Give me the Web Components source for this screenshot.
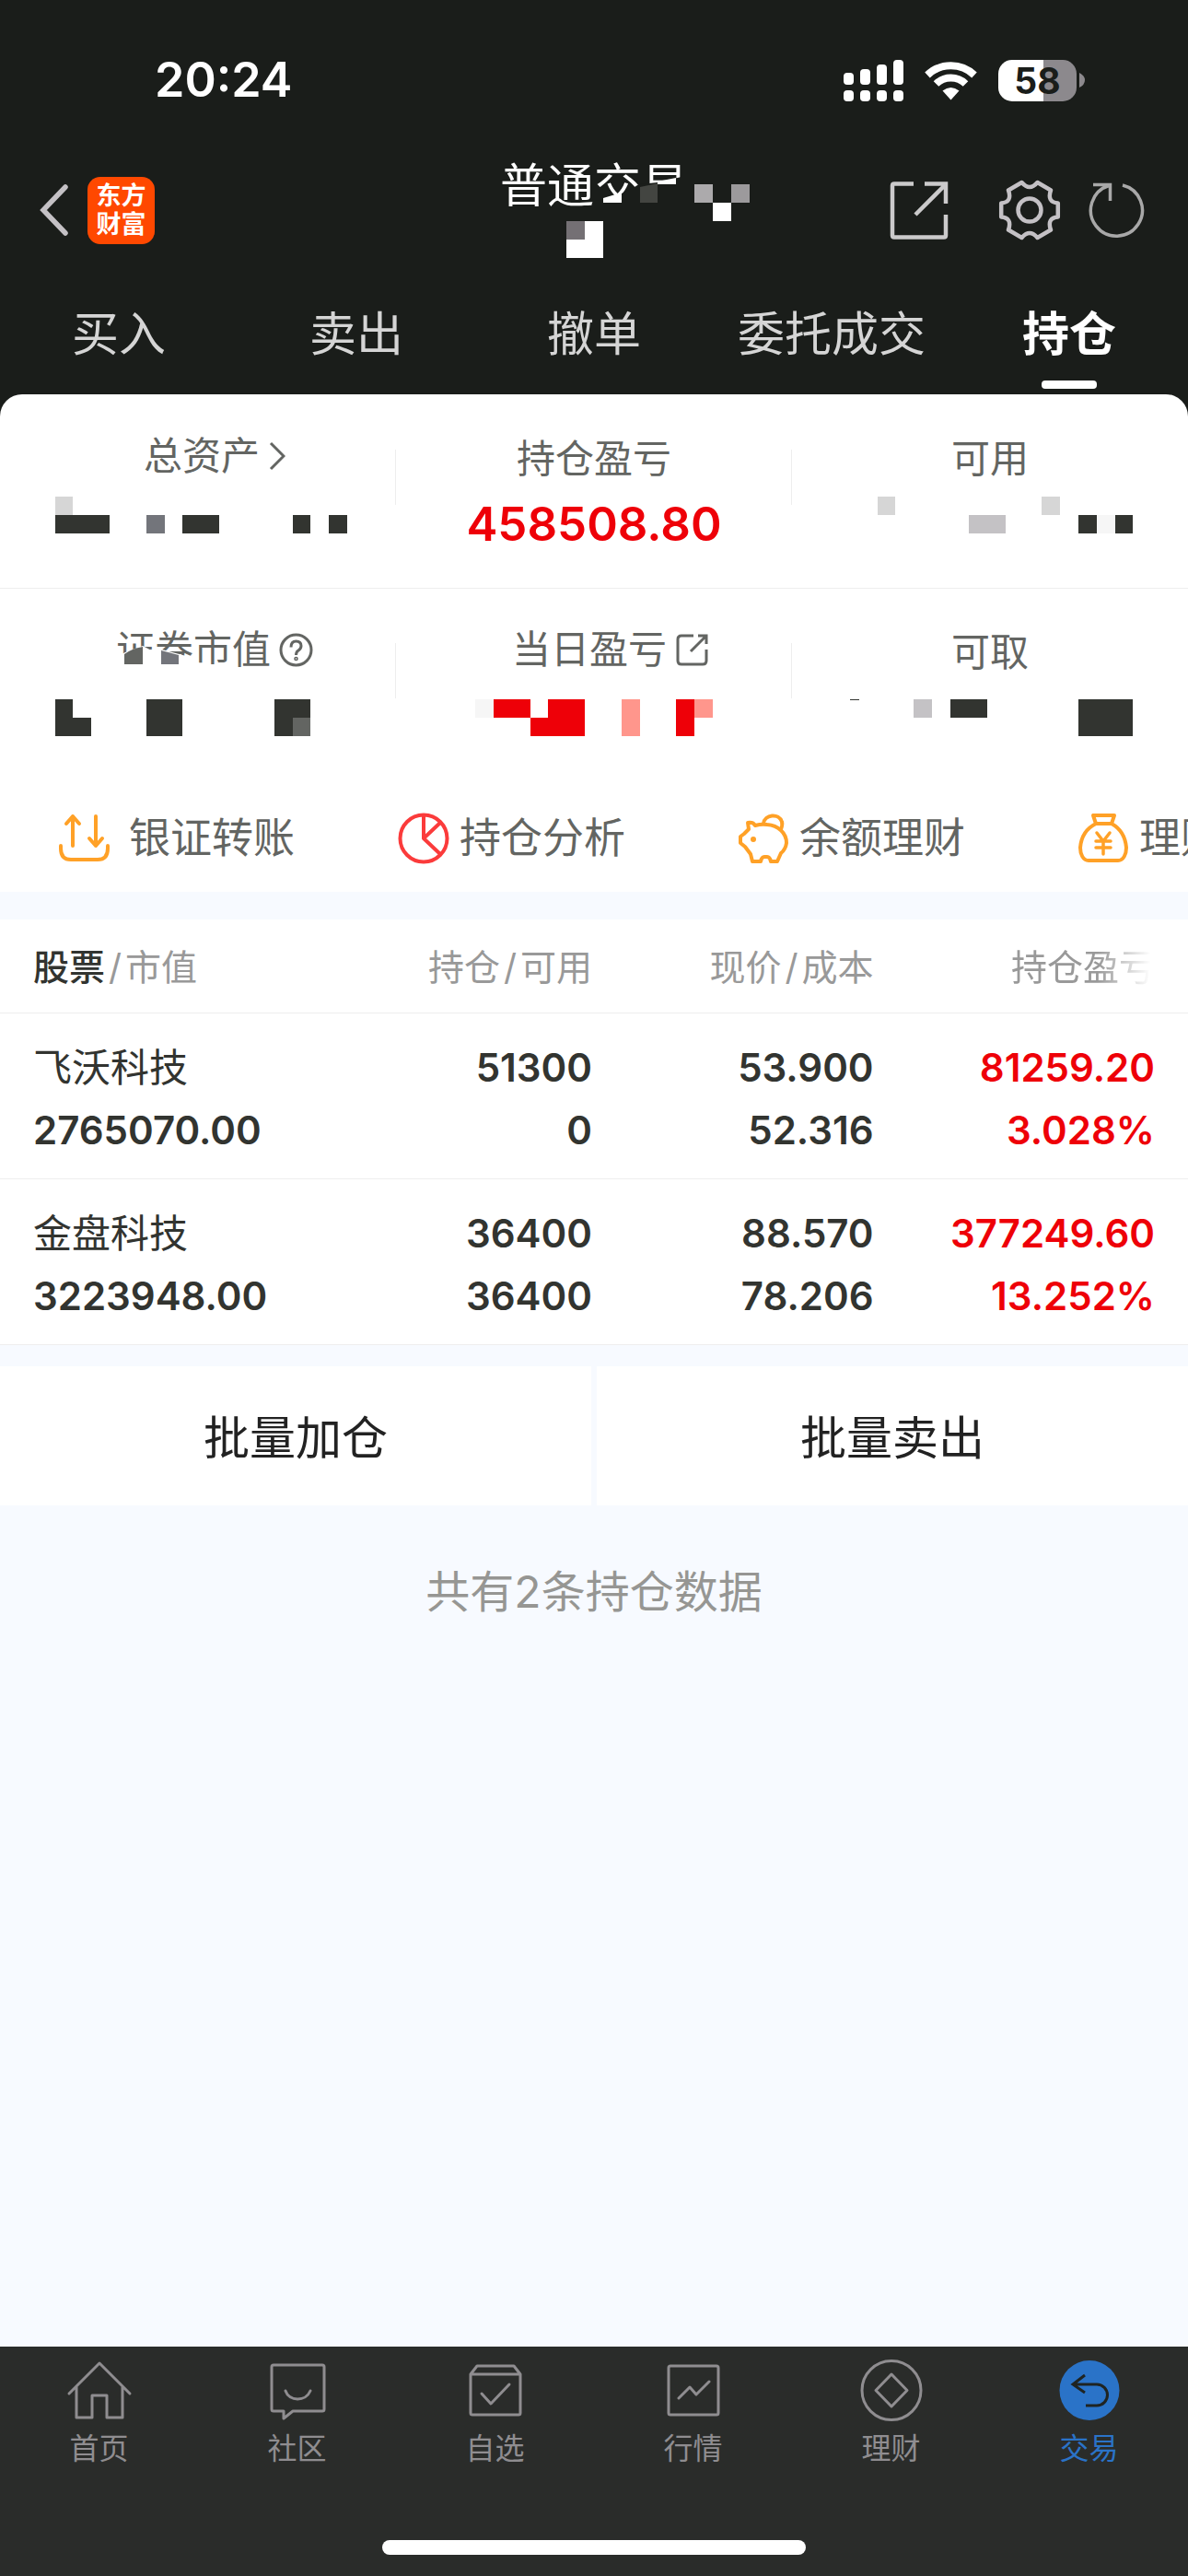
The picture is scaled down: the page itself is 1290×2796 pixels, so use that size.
<!DOCTYPE html>
<html lang="zh-CN">
<head>
<meta charset="utf-8">
<meta name="viewport" content="width=device-width, initial-scale=1">
<title>普通交易 - 持仓</title>
<style>
    body {
        margin: 0;
        font-family: Inter, "Noto Sans CJK SC", sans-serif;
        background: #f7faff;
    }
</style>
</head>
<body>
<trade-app></trade-app>

<script>
(function () {
    // every element below gets an open shadow root filled from one template string
    class BaseElement extends HTMLElement {
        constructor() {
            super();
            this.attachShadow({ mode: 'open' });
        }
        connectedCallback() {
            this.shadowRoot.innerHTML = `
                <style>
                *{ box-sizing:border-box; }
                :host{ display:block; }
                svg{ display:block; }
                a{ color:inherit; text-decoration:none; }
                button{
                    margin:0;
                    padding:0;
                    border:none;
                    background:none;
                    color:inherit;
                    font:inherit;
                    cursor:pointer;
                }
                </style>` + this.template();
        }
        template() { return ''; }
    }

    class StatusBar extends BaseElement {
        template() {
            return `
            <style>
            :host{ padding:55px 112px 51px 168px; color:#fff; }
            .bar{ display:flex; align-items:center; justify-content:space-between; height:64px; }
            .time{ font-size:52px; font-weight:600; line-height:64px; }
            .icons{ display:flex; align-items:center; gap:23px; }
            .battery{ display:flex; align-items:center; gap:3px; }
            .level{
                width:85px;
                border-radius:15px;
                background:linear-gradient(to right, #fff 58%, #8c898d 58%);
                color:#1a1d1a;
                font-size:39px;
                font-weight:700;
                line-height:45px;
                text-align:center;
            }
            </style>
            <div class="bar">
                <div class="time">20:24</div>
                <div class="icons">
                    <svg width="65" height="45" viewBox="0 0 65 45" fill="#fff">
                        <rect x="0" y="14" width="11" height="13" rx="4"/>
                        <rect x="18" y="10" width="11" height="17" rx="4"/>
                        <rect x="36" y="5" width="11" height="22" rx="4"/>
                        <rect x="54" y="0" width="11" height="27" rx="4"/>
                        <rect x="0" y="33" width="11" height="12" rx="4"/>
                        <rect x="18" y="33" width="11" height="12" rx="4"/>
                        <rect x="36" y="33" width="11" height="12" rx="4"/>
                        <rect x="54" y="33" width="11" height="12" rx="4"/>
                    </svg>
                    <svg width="57" height="45" viewBox="0 0 57 45">
                        <path d="M3 16.5A37 37 0 0 1 54 16.5" fill="none" stroke="#fff" stroke-width="8"/>
                        <path d="M12.500 26A23 23 0 0 1 44.500 26" fill="none" stroke="#fff" stroke-width="8"/>
                        <path d="M19.500 33.500Q28.500 26.500 37.500 33.500L28.500 43.500Z" fill="#fff"/>
                    </svg>
                    <div class="battery">
                        <div class="level">58</div>
                        <svg width="6" height="16" viewBox="0 0 6 16"><path d="M0 0Q6 3 6 8Q6 13 0 16Z" fill="#8c898d"/></svg>
                    </div>
                </div>
            </div>`;
        }
    }
    customElements.define('status-bar', StatusBar);

    class TradeHeader extends BaseElement {
        template() {
            return `
            <style>
            :host{ padding:0 42px; }
            header{ display:grid; grid-template-columns:1fr auto 1fr; align-items:center; height:116px; }
            .left{ display:flex; align-items:center; gap:21px; }
            .logo{
                width:73px;
                height:73px;
                padding:5px 0;
                border-radius:14px;
                background:#ff4800;
                color:#fff;
                font-size:27px;
                font-weight:700;
                line-height:31px;
                text-align:center;
            }
            h1{
                position:relative;
                width:204px;
                height:104px;
                margin:0;
                color:#fff;
                font-size:51px;
                font-weight:400;
                line-height:52px;
                white-space:nowrap;
            }
            .mask{ position:absolute; left:0; top:0; overflow:visible; }
            .right{ display:flex; align-items:center; justify-content:flex-end; }
            .right button + button{ margin-left:48px; }
            .right button + .refresh{ margin-left:22px; }
            </style>
            <header>
                <div class="left">
                    <button aria-label="返回">
                        <svg width="32" height="56" viewBox="0 0 32 56"><path d="M29 3L5 28L29 53" fill="none" stroke="#c4c1c5" stroke-width="5.500" stroke-linecap="round"/></svg>
                    </button>
                    <div class="logo">东方<br>财富</div>
                </div>
                <h1>普通交易
                    <svg class="mask" width="204" height="104" viewBox="0 0 204 104">
                        <path d="M104 42L132 34L152 24L171 22L197 16L212 16V60H104Z" fill="#1a1d1a"/>
                        <path d="M112 39L132 33V44H112Z" fill="#fff"/>
                        <path d="M152 27L171 23V44H152Z" fill="#434541"/>
                        <path d="M171 21L191 17V24H171Z" fill="#fff"/>
                        <path d="M211 24h20v20h-20z" fill="#acaaac"/>
                        <path d="M251 24h20v20h-20z" fill="#9c9a9c"/>
                        <path d="M231 44h20v20h-20zM72 64h40v40h-40z" fill="#fff"/>
                        <path d="M72 64h20v20h-20z" fill="#747074"/>
                    </svg>
                </h1>
                <div class="right">
                    <button aria-label="分享">
                        <svg width="72" height="72" viewBox="0 0 72 72" fill="none" stroke="#cbcacb" stroke-width="4.500">
                            <path d="M30 7.500H9Q7 7.500 7 9.500V63.500Q7 65.500 9 65.500H63Q65 65.500 65 63.500V41"/>
                            <path d="M42 7.500H65V29M64 9L32 41"/>
                        </svg>
                    </button>
                    <button aria-label="设置">
                        <svg width="72" height="72" viewBox="0 0 72 72" fill="none" stroke="#c4c1c5" stroke-width="4.500" stroke-linejoin="round">
                            <path d="M66.800 43.500Q54.500 44.500 59 57.500L44.500 66Q36 56 27.500 66L13 57.500Q17.500 44.500 5.200 43.500V28.500Q17.500 27.500 13 14.500L27.500 6Q36 16 44.500 6L59 14.500Q54.500 27.500 66.800 28.500Z"/>
                            <circle cx="36" cy="36" r="12.500"/>
                        </svg>
                    </button>
                    <button class="refresh" aria-label="刷新">
                        <svg width="72" height="72" viewBox="0 0 72 72" fill="none" stroke="#a8a8a8" stroke-width="3.500">
                            <path d="M43 9A28 28 0 1 1 28 9.500M11 8.500H29.500V26"/>
                        </svg>
                    </button>
                </div>
            </header>`;
        }
    }
    customElements.define('trade-header', TradeHeader);

    class TradeTabs extends BaseElement {
        template() {
            return `
            <style>
            nav{ display:grid; grid-template-columns:repeat(5, 1fr); padding:38px 0 6px; }
            a{
                display:flex;
                flex-direction:column;
                align-items:center;
                gap:11px;
                color:#d5d5d5;
                font-size:51px;
                line-height:78px;
                white-space:nowrap;
            }
            a::after{ content:""; width:60px; height:9px; border-radius:4px; }
            a.active{ color:#fff; font-weight:700; }
            a.active::after{ background:#fff; }
            </style>
            <nav>
                <a href="#buy">买入</a>
                <a href="#sell">卖出</a>
                <a href="#cancel">撤单</a>
                <a href="#orders">委托成交</a>
                <a href="#holdings" class="active">持仓</a>
            </nav>`;
        }
    }
    customElements.define('trade-tabs', TradeTabs);

    // hidden amounts: x, y, width, height, colour of each block
    const DARK = '#323430', RED = '#ee0008', PINK = '#ff968c', PALE = '#d6d6d6';
    const MASKS = {
        total: [[60, 11, 19, 20, PALE], [60, 31, 59, 20, DARK], [159, 31, 20, 20, '#73757b'], [198, 31, 40, 20, DARK], [318, 31, 19, 20, DARK], [357, 31, 20, 20, DARK]],
        usable: [[93, 11, 19, 20, PALE], [271, 11, 20, 20, PALE], [192, 31, 40, 20, '#c4c2c5'], [311, 31, 20, 20, DARK], [331, 31, 20, 20, '#f6f6f6'], [351, 31, 19, 20, DARK]],
        market: [[60, 21, 19, 20, DARK], [60, 41, 39, 20, DARK], [159, 21, 39, 40, DARK], [298, 21, 39, 40, DARK], [318, 41, 19, 20, '#636562']],
        today: [[86, 21, 20, 20, '#f6f6f6'], [106, 21, 40, 20, RED], [146, 41, 19, 20, RED], [165, 21, 40, 40, RED], [245, 21, 20, 40, PINK], [304, 21, 20, 40, RED], [324, 21, 20, 20, PINK]],
        drawable: [[63, 21, 10, 1, DARK], [132, 21, 20, 20, '#c4c2c5'], [172, 21, 40, 20, DARK], [311, 21, 59, 40, DARK]]
    };

    class StatCell extends BaseElement {
        template() {
            const blocks = MASKS[this.getAttribute('mask')];
            const value = blocks
                ? `<svg width="430" height="82" viewBox="0 0 430 82" shape-rendering="crispEdges">` +
                  blocks.map(b => `<rect x="${b[0]}" y="${b[1]}" width="${b[2]}" height="${b[3]}" fill="${b[4]}"/>`).join('') +
                  `</svg>`
                : `<div class="value"><slot name="value"></slot></div>`;
            return `
            <style>
            :host{ display:flex; flex-direction:column; align-items:center; padding:40px 0 28px; }
            :host(:not([last])){ background:linear-gradient(#eee, #eee) no-repeat right 0 top 60px / 1px 60px; }
            .label{
                position:relative;
                display:flex;
                align-items:center;
                height:60px;
                color:#636562;
                font-size:42px;
                line-height:60px;
                white-space:nowrap;
            }
            :host([icon]) .label{ height:54px; margin:0 0 6px 36px; line-height:54px; }
            .value{ height:82px; color:#ee0008; font-size:51px; font-weight:600; line-height:82px; }
            </style>
            <div class="label"><slot></slot></div>
            ${value}`;
        }
    }
    customElements.define('stat-cell', StatCell);

    class AssetPanel extends BaseElement {
        template() {
            return `
            <style>
            :host{ background:#fff; border-radius:24px 24px 0 0; overflow:hidden; }
            .row{ display:grid; grid-template-columns:repeat(3, 1fr); }
            .row + .row{ box-shadow:inset 0 1px #eee; }
            .more{ margin-left:10px; }
            .tip{ margin-left:9px; }
            .cover{ position:absolute; left:0; top:0; }
            </style>
            <div class="row">
                <stat-cell icon mask="total">总资产<svg class="more" width="18" height="32" viewBox="0 0 18 32"><path d="M2 2L16 16L2 30" fill="none" stroke="#636562" stroke-width="3"/></svg></stat-cell>
                <stat-cell>持仓盈亏<span slot="value">458508.80</span></stat-cell>
                <stat-cell last mask="usable">可用</stat-cell>
            </div>
            <div class="row">
                <stat-cell icon mask="market">证券市值<button class="tip" aria-label="说明">
                        <svg width="37" height="37" viewBox="0 0 37 37" fill="none" stroke="#636562" stroke-width="3">
                            <circle cx="18.500" cy="18.500" r="16.500"/>
                            <path d="M13 15.500Q13 9 18.500 9Q24 9 24 14Q24 17 21 19Q18.500 20.500 18.500 24"/>
                            <circle cx="18.500" cy="28" r="0.800"/>
                        </svg>
                    </button>
                    <svg class="cover" width="130" height="54" viewBox="0 0 130 54">
                        <path d="M0 35L10 30L29 23L42 30L50 27L76 34L84 43H130V52H0Z" fill="#fff"/>
                        <path d="M9 32Q17 26 29 24V43H9Z" fill="#636562"/>
                        <path d="M49 28L68 33V43H49Z" fill="#73757b"/>
                    </svg></stat-cell>
                <stat-cell icon mask="today">当日盈亏<button class="tip" aria-label="打开当日盈亏">
                        <svg width="37" height="37" viewBox="0 0 37 37" fill="none" stroke="#636562" stroke-width="3">
                            <path d="M20 3H7Q3 3 3 7V30Q3 34 7 34H30Q34 34 34 30V18"/>
                            <path d="M25 3H34V12M33 4L17 20"/>
                        </svg>
                    </button></stat-cell>
                <stat-cell last mask="drawable">可取</stat-cell>
            </div>`;
        }
    }
    customElements.define('asset-panel', AssetPanel);

    class QuickAction extends BaseElement {
        template() {
            return `
            <style>
            :host{ flex:0 0 369px; }
            a{
                display:flex;
                align-items:center;
                gap:11px;
                padding-top:4px;
                color:#636562;
                font-size:45px;
                line-height:116px;
                white-space:nowrap;
            }
            :host([wide]) a{ gap:21px; }
            </style>
            <a href="#action"><slot name="icon"></slot><slot></slot></a>`;
        }
    }
    customElements.define('quick-action', QuickAction);

    class QuickActions extends BaseElement {
        template() {
            return `
            <style>
            :host{ background:#fff; }
            .list{ display:flex; padding-left:63px; overflow-x:auto; scrollbar-width:none; }
            svg{ fill:none; stroke:#ffa127; stroke-width:4; stroke-linecap:round; stroke-linejoin:round; }
            </style>
            <div class="list">
                <quick-action wide>
                    <svg slot="icon" width="56" height="56" viewBox="0 0 56 56">
                        <path d="M16 36V4M9 12L16 4L23 12M41 4V36M34 28L41 36L48 28M3 36V39Q3 51 14 51H43Q54 51 54 39V36"/>
                    </svg>银证转账
                </quick-action>
                <quick-action>
                    <svg slot="icon" width="56" height="56" viewBox="0 0 56 56" style="stroke:#fb3b3b">
                        <circle cx="28" cy="28" r="25.500"/><path d="M28 3V28L46 11M28 28L46 45"/>
                    </svg>持仓分析
                </quick-action>
                <quick-action>
                    <svg slot="icon" width="56" height="56" viewBox="0 0 56 56">
                        <path d="M11 11Q17 10 19 14Q26 12 32 13C44 14 53 22 53 33Q52 40 47 44L43 53H36Q35 48 32 48H29Q26 48 25 53H16L14 45L8 37L3 33V26L7 23L12 18Z"/>
                        <path d="M28 12C29 2 45 0 48 10Q49 13 47 18"/>
                        <circle cx="17" cy="29" r="3" fill="#ffa127" stroke="none"/>
                    </svg>余额理财
                </quick-action>
                <quick-action>
                    <svg slot="icon" width="56" height="56" viewBox="0 0 56 56">
                        <path d="M17 3H40L37 12H20ZM20 12C10 17 4 26 3 38C3 45 6 52 12 52H44C50 52 53 45 53 38C52 26 46 17 37 12"/>
                        <path d="M21 22L28 31L35 22M28 31V45M20 31H36M20 38H36" stroke-width="3.500"/>
                    </svg>理财
                </quick-action>
            </div>`;
        }
    }
    customElements.define('quick-actions', QuickActions);

    const HOLDINGS = [
        ['飞沃科技', '2765070.00', '51300', '0', '53.900', '52.316', '81259.20', '3.028%'],
        ['金盘科技', '3223948.00', '36400', '36400', '88.570', '78.206', '377249.60', '13.252%']
    ];

    class HoldingsTable extends BaseElement {
        template() {
            const rows = HOLDINGS.map(h => `
                <tr>
                    <td><div class="name">${h[0]}</div><div>${h[1]}</div></td>
                    <td><div>${h[2]}</div><div>${h[3]}</div></td>
                    <td><div>${h[4]}</div><div>${h[5]}</div></td>
                    <td class="up"><div>${h[6]}</div><div>${h[7]}</div></td>
                </tr>`).join('');
            return `
            <style>
            :host{ margin-top:30px; background:#fff; }
            table{ width:100%; border-collapse:collapse; table-layout:fixed; color:#323430; }
            th, td{ padding:0; border-bottom:1px solid #eee; text-align:right; white-space:nowrap; }
            th:nth-child(1){ width:26%; }
            th:nth-child(2){ width:24%; }
            th:nth-child(3){ width:24%; }
            th:first-child, td:first-child{ padding-left:36px; text-align:left; }
            th:nth-child(2), td:nth-child(2){ padding-right:2px; }
            th:nth-child(3), td:nth-child(3){ padding-right:6px; }
            th:last-child, td:last-child{ padding-right:36px; }
            th{ padding-top:2px; color:#999; font-size:39px; font-weight:400; line-height:99px; }
            th b{ color:#323430; font-weight:500; }
            th i{ margin:0 4px; font-style:normal; }
            .fade{
                -webkit-mask-image:linear-gradient(to right, #000 60%, transparent 97%);
                mask-image:linear-gradient(to right, #000 60%, transparent 97%);
            }
            td{ padding-top:25px; padding-bottom:18px; font-size:42px; font-weight:600; line-height:68px; }
            .name{ font-weight:400; }
            .up{ color:#ee0008; }
            </style>
            <table>
                <thead>
                    <tr>
                        <th><b>股票</b><i>/</i>市值</th>
                        <th>持仓<i>/</i>可用</th>
                        <th>现价<i>/</i>成本</th>
                        <th><span class="fade">持仓盈亏</span></th>
                    </tr>
                </thead>
                <tbody>${rows}</tbody>
            </table>`;
        }
    }
    customElements.define('holdings-table', HoldingsTable);

    class BatchBar extends BaseElement {
        template() {
            return `
            <style>
            .bar{ display:grid; grid-template-columns:1fr 1fr; gap:6px; margin-top:23px; }
            button{ padding-top:5px; background:#fff; color:#222; font-size:50px; line-height:146px; }
            p{ margin:64px 0; color:#969693; font-size:48px; line-height:60px; text-align:center; }
            </style>
            <div class="bar"><button>批量加仓</button><button>批量卖出</button></div>
            <p>共有2条持仓数据</p>`;
        }
    }
    customElements.define('batch-bar', BatchBar);

    class BottomBar extends BaseElement {
        template() {
            return `
            <style>
            :host{ padding:13px 0 23px; background:#2a2c2a; }
            nav{ display:grid; grid-template-columns:repeat(6, 1fr); }
            a{ display:flex; flex-direction:column; align-items:center; color:#8f8d90; font-size:32px; line-height:52px; }
            svg{ fill:none; stroke:#8f8d90; stroke-width:3; stroke-linejoin:round; stroke-linecap:round; }
            a.active{ color:#2a73c8; }
            .home{ width:460px; height:16px; margin:73px auto 0; border-radius:8px; background:#fff; }
            </style>
            <nav>
                <a href="#home">
                    <svg width="72" height="72" viewBox="0 0 72 72"><path d="M3 38L36 5L69 38M11 31V64H28V40H44V64H61V31"/></svg>首页
                </a>
                <a href="#community">
                    <svg width="72" height="72" viewBox="0 0 72 72"><path d="M10 7H63Q65 7 65 9V55Q65 57 63 57H31L21 65V57H10Q8 57 8 55V9Q8 7 10 7ZM23 35C27 47 45 47 50 35"/></svg>社区
                </a>
                <a href="#watchlist">
                    <svg width="72" height="72" viewBox="0 0 72 72"><path d="M9 17H63V59Q63 61 61 61H11Q9 61 9 59V17L16 8H56L63 17M21 38L31 49L51 28"/></svg>自选
                </a>
                <a href="#quotes">
                    <svg width="72" height="72" viewBox="0 0 72 72"><rect x="9" y="8" width="54" height="53" rx="2"/><path d="M20 43L32 31L39 39L53 25"/></svg>行情
                </a>
                <a href="#finance">
                    <svg width="72" height="72" viewBox="0 0 72 72"><circle cx="36" cy="34.500" r="32"/><path d="M36 17L53 34.500L36 52L19 34.500Z"/></svg>理财
                </a>
                <a href="#trade" class="active">
                    <svg width="72" height="72" viewBox="0 0 72 72"><circle cx="36" cy="34.500" r="32.500" fill="#2a73c8" stroke="none"/><path d="M31 18L18 28L31 37M18 28H44A11.500 11.500 0 0 1 44 51H32" stroke="#1f2422" stroke-linejoin="miter" stroke-linecap="butt"/></svg>交易
                </a>
            </nav>
            <div class="home"></div>`;
        }
    }
    customElements.define('bottom-bar', BottomBar);

    class TradeApp extends BaseElement {
        template() {
            return `
            <style>
            :host{ display:flex; flex-direction:column; min-height:100vh; }
            .top{ background:#1a1d1a; }
            main{ flex:1; }
            </style>
            <div class="top">
                <status-bar></status-bar>
                <trade-header></trade-header>
                <trade-tabs></trade-tabs>
                <asset-panel></asset-panel>
            </div>
            <main>
                <quick-actions></quick-actions>
                <holdings-table></holdings-table>
                <batch-bar></batch-bar>
            </main>
            <bottom-bar></bottom-bar>`;
        }
    }
    customElements.define('trade-app', TradeApp);
}());
</script>
</body>
</html>
